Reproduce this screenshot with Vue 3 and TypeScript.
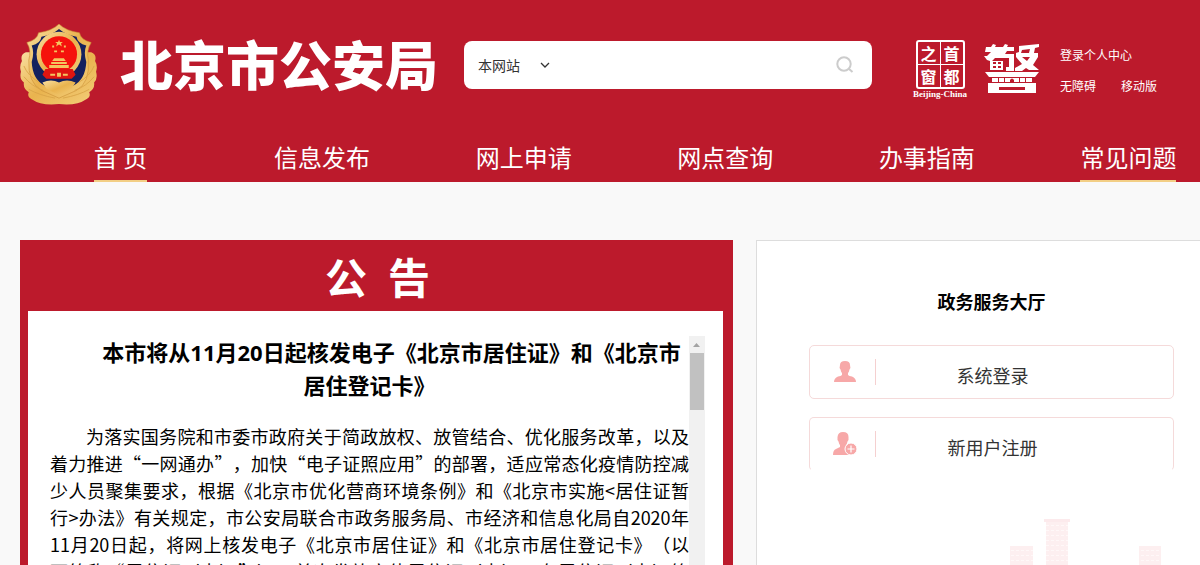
<script setup lang="ts">
import { ref } from 'vue'

interface NavItem { label: string; active?: boolean }

const nav: NavItem[] = [
  { label: '首 页', active: true },
  { label: '信息发布' },
  { label: '网上申请' },
  { label: '网点查询' },
  { label: '办事指南' },
  { label: '常见问题', active: true },
]

const noticeLines: string[] = [
  '为落实国务院和市委市政府关于简政放权、放管结合、优化服务改革，以及',
  '着力推进“一网通办”，加快“电子证照应用”的部署，适应常态化疫情防控减',
  '少人员聚集要求，根据《北京市优化营商环境条例》和《北京市实施<居住证暂',
  '行>办法》有关规定，市公安局联合市政务服务局、市经济和信息化局自2020年',
  '11月20日起，将网上核发电子《北京市居住证》和《北京市居住登记卡》（以',
  '下简称“居住证（卡）”），首次发放实体居住证（卡），在居住证（卡）签',
]

const scope = ref('本网站')
const keyword = ref('')
</script>

<template>
  <div class="page">
    <header class="header">
      <div class="top">
        <a href="#" class="brand">
          <svg class="emblem" viewBox="0 0 80 84" aria-hidden="true">
            <defs>
              <linearGradient id="gold" x1="0" y1="0" x2="1" y2="1">
                <stop offset="0" stop-color="#f9dfa0" />
                <stop offset="0.5" stop-color="#e9b34e" />
                <stop offset="1" stop-color="#f3cf7c" />
              </linearGradient>
            </defs>
            <path fill="url(#gold)" d="M6 29Q0 31 2 38Q-1 43 1 49Q-1 56 4 60Q3 66 9 70Q7 75 12 77Q22 84 40 82Q58 84 68 77Q73 75 71 70Q77 66 76 60Q80 56 78 49Q80 43 77 38Q79 31 73 29Z" />
            <path fill="url(#gold)" stroke="#c98f35" stroke-width="0.6" d="M40 0Q33 7 19 9Q18 16 7 19Q12 27 9 37Q8 60 22 68L40 76L58 68Q72 60 70 37Q68 27 73 19Q62 16 61 9Q47 7 40 0Z" />
            <path fill="#14215e" d="M40 5Q33 11 22 13Q21 20 12 22Q15 29 12 39Q13 57 25 63L40 69L55 63Q67 57 68 39Q65 29 68 22Q59 20 58 13Q47 11 40 5Z" />
            <path fill="url(#gold)" d="M23 60Q32 56 40 60Q48 56 57 60L53 66L40 73L27 66Z" />
            <circle cx="40" cy="31" r="23" fill="url(#gold)" />
            <circle cx="40" cy="31" r="18.5" fill="#f5120c" />
            <path fill="#e01510" d="M26 46H54L57 52L53 56H27L23 52Z" />
            <path fill="#f4c65f" d="M40 16L41 18.500H44L42 20L43 23L40 21L37 23L38 20L36 18.500H39ZM33 22H35V24H33ZM45 22H47V24H45ZM35 27H38V29H35ZM42 27H45V29H42ZM35 35H45L47 38H33ZM32 39H48V41H32ZM30 42H50V45H30ZM31 51H36V53H31ZM38 50H42V54H38ZM44 51H49V53H44Z" />
            <path fill="none" stroke="#d9a548" stroke-width="0.9" d="M4 43Q8 53 20 60M4 54Q12 64 24 68M9 67Q20 73 36 76M76 43Q72 53 60 60M76 54Q68 64 56 68M71 67Q60 73 44 76" />
          </svg>
          <span class="name">北京市公安局</span>
        </a>
        <form class="search" @submit.prevent>
          <div class="scope">
            <select v-model="scope" aria-label="搜索范围">
              <option>本网站</option>
            </select>
            <svg class="chevron" viewBox="0 0 10 8" aria-hidden="true"><path d="M1 2L5 6L9 2" fill="none" stroke="#333" stroke-width="1.300" /></svg>
          </div>
          <input v-model="keyword" type="text" aria-label="关键词" />
          <button type="submit" aria-label="搜索">
            <svg viewBox="0 0 18 18" aria-hidden="true"><circle cx="8" cy="8" r="6.700" fill="none" stroke="#ccc" stroke-width="2" /><path d="M12.500 12.500L16.500 16" stroke="#ccc" stroke-width="2" /></svg>
          </button>
        </form>
        <a href="#" class="capital">
          <span class="seal"><span>之</span><span>首</span><span>窗</span><span>都</span></span>
          <span class="latin">Beijing-China</span>
        </a>
        <a href="#" class="police" aria-label="警">
          <svg viewBox="0 0 56 50" aria-hidden="true">
            <path fill="#fff" d="M2 3H7L9 0L12 1L11 3H19L21 0L24 1L23 3H30V7H23L21 10H30V27H22V23H25V14H11L8 17H19V26H6V17L3 16L0 12H3L7 8H1Z" />
            <path fill="#bc1a2c" d="M9 18H12V20H9ZM14 18H17V20H14ZM9 22H12V24H9ZM14 22H17V24H14Z" />
            <path fill="#fff" d="M35 2L55 0V3L51 4L50 9H54V13L49 21L55 26H45L42 24L38 27H31V24L38 20L32 13V9L35 8ZM38 13L43 17L46 13ZM38 6L37 9H45L46 5Z" />
            <path fill="#fff" d="M1 28H55L51 33H5ZM8 34H48V38H8ZM4 39H52V49H4Z" />
            <path fill="#bc1a2c" d="M14 34H15V38H14ZM20 34H21V38H20ZM35 34H36V38H35ZM41 34H42V38H41ZM26 38V36Q28 33 30 36V38ZM15 43H41V46H15Z" />
          </svg>
        </a>
        <div class="links">
          <a href="#">登录个人中心</a>
          <div class="pair"><a href="#">无障碍</a><a href="#">移动版</a></div>
        </div>
      </div>
      <nav class="nav">
        <div v-for="item in nav" :key="item.label" class="cell">
          <a href="#" :class="{ active: item.active }">{{ item.label }}</a>
        </div>
      </nav>
    </header>

    <main class="main">
      <section class="notice">
        <h2>公&ensp;告</h2>
        <div class="sheet">
          <article class="text">
            <h3>本市将从11月20日起核发电子《北京市居住证》和《北京市<br />居住登记卡》</h3>
            <p><span v-for="line in noticeLines" :key="line">{{ line }}</span></p>
          </article>
          <div class="scrollbar" aria-hidden="true">
            <svg viewBox="0 0 7 4"><path d="M0 4L3.500 0L7 4Z" fill="#a3a3a3" /></svg>
            <div class="thumb"></div>
          </div>
        </div>
      </section>

      <aside class="hall">
        <h2>政务服务大厅</h2>
        <button type="button" class="entry">
          <span class="icon"><svg viewBox="0 0 24 24" aria-hidden="true"><path fill="#f7a8a8" d="M12 1Q17 1 17 5Q18 8 16.500 9.500Q16 12 15 13V15Q16 16 19 16.500Q23 18 23 22H1Q1 18 5 16.500Q8 16 9 15V13Q8 12 7.500 9.500Q6 8 7 5Q7 1 12 1Z" /></svg></span>
          <span class="label">系统登录</span>
        </button>
        <button type="button" class="entry last">
          <span class="icon"><svg viewBox="0 0 24 24" aria-hidden="true"><path fill="#f7a8a8" d="M10 0Q15.500 0 15.500 5Q16 8 14.500 9.500Q14 12 13 13V15L16 17V23H0Q0 18 3 17L7 15V13Q6 12 5.500 9.500Q4 8 4.500 5Q5 0 10 0Z" /><circle cx="18" cy="17" r="6" fill="#f7a8a8" stroke="#fff" stroke-width="1" /><path stroke="#fff" stroke-width="1.200" d="M14.500 17H21.500M18 13.500V20.500" /></svg></span>
          <span class="label">新用户注册</span>
        </button>
        <svg class="city" viewBox="0 0 152 110" aria-hidden="true">
          <defs>
            <pattern id="windows" width="5" height="5" patternUnits="userSpaceOnUse"><rect width="5" height="5" fill="#fdeff0" /><path d="M1 1.500H4" stroke="#fff8f8" /></pattern>
          </defs>
          <path fill="url(#windows)" d="M0 27H23V110H0ZM36 1H58V110H36ZM129 27H151V110H129Z" />
          <path fill="#fceaec" d="M34 0H60V3H34Z" />
        </svg>
      </aside>
    </main>
  </div>
</template>

<style>
body {
  margin: 0;
  background: #f9f9f9;
}
</style>

<style scoped>
.page {
  height: 100vh;
  display: flex;
  flex-direction: column;
  overflow: hidden;
  font-family: "Noto Sans CJK SC", "Noto Sans", sans-serif;
  text-spacing-trim: space-all;
  color: #000;
}
a {
  color: #fff;
  text-decoration: none;
}
h2, h3, p {
  margin: 0;
}
.header {
  background: #bc1a2c;
  flex: none;
}
.top {
  display: flex;
  align-items: center;
  height: 130px;
  padding: 0 20px;
}
.brand {
  display: flex;
  align-items: center;
  gap: 22px;
  width: 444px;
  flex: none;
}
.emblem {
  width: 78px;
  height: 82px;
  flex: none;
}
.name {
  padding-bottom: 4px;
  font-size: 53px;
  line-height: 60px;
  font-weight: 900;
  white-space: nowrap;
}
.search {
  display: flex;
  align-items: center;
  flex: 1;
  height: 48px;
  min-width: 0;
  background: #fff;
  border-radius: 8px;
}
.scope {
  display: flex;
  align-items: center;
  padding-left: 14px;
  gap: 2px;
}
.scope select {
  appearance: none;
  width: 60px;
  border: 0;
  padding: 0;
  background: transparent;
  font: 14px/24px "Noto Sans CJK SC", sans-serif;
  color: #333;
}
.chevron {
  width: 10px;
  height: 8px;
}
.search input {
  flex: 1;
  min-width: 0;
  height: 40px;
  border: 0;
  outline: 0;
  background: transparent;
  font-size: 14px;
}
.search button {
  display: flex;
  border: 0;
  padding: 0 18px;
  background: transparent;
}
.search button svg {
  width: 18px;
  height: 18px;
}
.capital {
  display: flex;
  flex-direction: column;
  align-items: center;
  width: 56px;
  margin-left: 40px;
  padding-top: 8px;
}
.seal {
  display: grid;
  grid-template-columns: 1fr 1fr;
  grid-template-rows: 1fr 1fr;
  align-items: center;
  gap: 1px;
  width: 45px;
  height: 45px;
  border: 2px solid #fff;
  border-radius: 3px;
  background: linear-gradient(#fff, #fff) center / 1px 100% no-repeat, linear-gradient(#fff, #fff) center / 100% 1px no-repeat;
  font: 700 16px/16px "Noto Sans CJK SC", sans-serif;
  text-align: center;
}
.seal span {
  height: 16px;
}
.latin {
  font: 700 9px/10px "Liberation Serif", serif;
  white-space: nowrap;
}
.police {
  display: flex;
  margin: 8px 20px 0 16px;
}
.police svg {
  width: 56px;
  height: 50px;
}
.links {
  width: 120px;
  padding-top: 10px;
  font-size: 12px;
  line-height: 20px;
}
.pair {
  display: flex;
  gap: 25px;
  margin-top: 11px;
}
.nav {
  display: flex;
  justify-content: space-between;
  padding: 0 23px 0 72px;
}
.cell {
  display: flex;
  justify-content: center;
  min-width: 97px;
}
.nav a {
  height: 50px;
  border-bottom: 2px solid transparent;
  font-size: 24px;
  line-height: 54px;
  white-space: nowrap;
}
.nav a.active {
  border-color: #f3cf86;
}
.main {
  flex: 1;
  min-height: 0;
  display: grid;
  grid-template-columns: 713fr 444fr;
  gap: 23px;
  padding: 58px 0 0 20px;
}
.notice {
  display: flex;
  flex-direction: column;
  min-height: 0;
  min-width: 0;
  padding: 0 10px 0 8px;
  background: #bc1a2c;
}
.notice h2 {
  padding-left: 4px;
  color: #fff;
  font-size: 42px;
  line-height: 71px;
  text-align: center;
}
.sheet {
  flex: 1;
  min-height: 0;
  display: flex;
  padding: 25px 18px 0 22px;
  background: #fff;
}
.text {
  flex: 1;
  min-width: 0;
  overflow: hidden;
}
.text h3 {
  font: 700 22px/33px "Noto Sans", "Noto Sans CJK SC", sans-serif;
  text-align: center;
  text-indent: 44px;
  white-space: nowrap;
}
.text p {
  margin-top: 21px;
  font-size: 18px;
  line-height: 27px;
}
.text p span {
  display: block;
  text-align: justify;
  text-align-last: justify;
}
.text p span:first-child {
  padding-left: 36px;
}
.scrollbar {
  flex: none;
  width: 16px;
  background: #f1f1f1;
}
.scrollbar svg {
  display: block;
  width: 7px;
  height: 4px;
  margin: 7px 4px 6px;
}
.thumb {
  width: 14px;
  height: 57px;
  margin-left: 1px;
  background: #c1c1c1;
}
.hall {
  display: flex;
  flex-direction: column;
  min-height: 0;
  overflow: hidden;
  padding: 44px 26px 0 52px;
  border: solid #ddd;
  border-width: 1px 0 0 1px;
  background: #fff;
}
.hall h2 {
  font-size: 18px;
  line-height: 32px;
  text-align: center;
}
.entry {
  flex: none;
  display: flex;
  align-items: center;
  height: 54px;
  margin-top: 28px;
  padding: 0;
  border: 1px solid #f5dada;
  border-radius: 5px;
  background: #fff;
  font: 18px/28px "Noto Sans CJK SC", sans-serif;
  color: #333;
}
.entry.last {
  margin-top: 18px;
  border-bottom-color: transparent;
}
.icon {
  display: flex;
  width: 42px;
  padding-left: 23px;
  border-right: 1px solid #f5d0d0;
}
.icon svg {
  width: 24px;
  height: 26px;
}
.label {
  flex: 1;
  padding: 6px 64px 0 0;
  text-align: center;
}
.city {
  flex: none;
  width: 152px;
  height: 110px;
  margin: 48px 12px 0 auto;
}
</style>
